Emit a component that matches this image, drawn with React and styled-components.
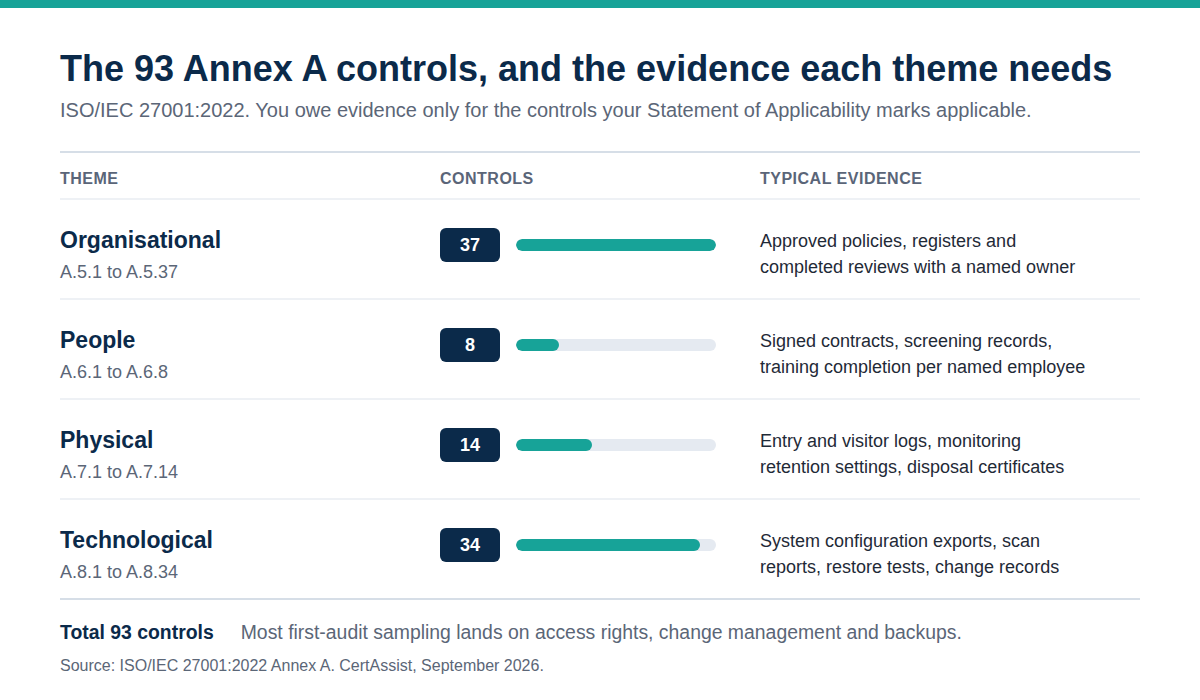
import React from "react";
import styled, { createGlobalStyle } from "styled-components";

const GlobalStyle = createGlobalStyle`
  html, body {
    margin: 0;
    padding: 0;
    background: #ffffff;
    font-family: "Liberation Sans", Arial, sans-serif;
  }
`;

const themes = [
  {
    name: "Organisational",
    range: "A.5.1 to A.5.37",
    count: 37,
    evidence: ["Approved policies, registers and", "completed reviews with a named owner"],
  },
  {
    name: "People",
    range: "A.6.1 to A.6.8",
    count: 8,
    evidence: ["Signed contracts, screening records,", "training completion per named employee"],
  },
  {
    name: "Physical",
    range: "A.7.1 to A.7.14",
    count: 14,
    evidence: ["Entry and visitor logs, monitoring", "retention settings, disposal certificates"],
  },
  {
    name: "Technological",
    range: "A.8.1 to A.8.34",
    count: 34,
    evidence: ["System configuration exports, scan", "reports, restore tests, change records"],
  },
];

const MAX = 37;

const App = () => {
  return (
    <StPage>
      <GlobalStyle />
      <StTopBar />
      <StContent>
        <StTitle>The 93 Annex A controls, and the evidence each theme needs</StTitle>
        <StSubtitle>
          ISO/IEC 27001:2022. You owe evidence only for the controls your Statement of Applicability marks applicable.
        </StSubtitle>

        <StTable>
          <StHeadRow>
            <StHead>Theme</StHead>
            <StHead>Controls</StHead>
            <StHead>Typical evidence</StHead>
          </StHeadRow>
          {themes.map((t, i) => (
            <StRow key={t.name} $last={i === themes.length - 1}>
              <div>
                <StName>{t.name}</StName>
                <StRange>{t.range}</StRange>
              </div>
              <StControls>
                <StBadge>{t.count}</StBadge>
                <StTrack>
                  <StFill style={{ width: `${(t.count / MAX) * 100}%` }} />
                </StTrack>
              </StControls>
              <StEvidence>
                {t.evidence[0]}
                <br />
                {t.evidence[1]}
              </StEvidence>
            </StRow>
          ))}
        </StTable>

        <StFooter>
          <StTotal>Total 93 controls</StTotal>
          <StNote>Most first-audit sampling lands on access rights, change management and backups.</StNote>
        </StFooter>
        <StSource>Source: ISO/IEC 27001:2022 Annex A. CertAssist, September 2026.</StSource>
      </StContent>
    </StPage>
  );
};

export default App;

const StPage = styled.div`
  width: 1200px;
  height: 700px;
  background: #ffffff;
  overflow: hidden;
`;

const StTopBar = styled.div`
  height: 8px;
  background: #17a398;
`;

const StContent = styled.div`
  padding: 0 60px;
`;

const StTitle = styled.h1`
  margin: 39px 0 0;
  font-size: 36px;
  line-height: 44px;
  font-weight: 700;
  color: #0b2a4a;
`;

const StSubtitle = styled.p`
  margin: 6px 0 0;
  font-size: 20px;
  line-height: 26px;
  color: #5b6677;
`;

const StTable = styled.div`
  margin-top: 28px;
  border-top: 2px solid #d6dee7;
  border-bottom: 2px solid #d6dee7;
`;

const StHeadRow = styled.div`
  display: grid;
  grid-template-columns: 380px 320px 1fr;
  height: 45px;
  align-items: center;
  border-bottom: 2px solid #eef1f5;
`;

const StHead = styled.div`
  font-size: 16px;
  letter-spacing: 0.5px;
  font-weight: 700;
  text-transform: uppercase;
  color: #5a6578;
  padding-top: 7px;
`;

const StRow = styled.div`
  display: grid;
  grid-template-columns: 380px 320px 1fr;
  align-items: start;
  padding-top: 26px;
  box-sizing: border-box;
  border-bottom: ${({ $last }) => ($last ? "none" : "2px solid #eef1f5")};
  height: ${({ $last }) => ($last ? "98px" : "100px")};
`;

const StName = styled.div`
  font-size: 23px;
  line-height: 28px;
  font-weight: 700;
  color: #0b2a4a;
`;

const StRange = styled.div`
  margin-top: 7px;
  font-size: 18px;
  line-height: 22px;
  color: #5b6677;
`;

const StControls = styled.div`
  display: flex;
  align-items: center;
  gap: 16px;
  margin-top: 2px;
`;

const StBadge = styled.div`
  width: 60px;
  height: 34px;
  border-radius: 6px;
  background: #0b2a4a;
  color: #ffffff;
  font-size: 18px;
  font-weight: 700;
  display: flex;
  align-items: center;
  justify-content: center;
`;

const StTrack = styled.div`
  width: 200px;
  height: 12px;
  border-radius: 6px;
  background: #e5eaf1;
  overflow: hidden;
`;

const StFill = styled.div`
  height: 100%;
  border-radius: 6px;
  background: #17a398;
`;

const StEvidence = styled.div`
  margin-top: 2px;
  font-size: 18px;
  line-height: 26px;
  color: #1f2a37;
`;

const StFooter = styled.div`
  display: flex;
  align-items: baseline;
  gap: 27px;
  margin-top: 21px;
`;

const StTotal = styled.div`
  font-size: 19.4px;
  font-weight: 700;
  color: #0b2a4a;
`;

const StNote = styled.div`
  font-size: 19.4px;
  color: #5b6677;
`;

const StSource = styled.div`
  margin-top: 13px;
  font-size: 16px;
  color: #5b6677;
`;
